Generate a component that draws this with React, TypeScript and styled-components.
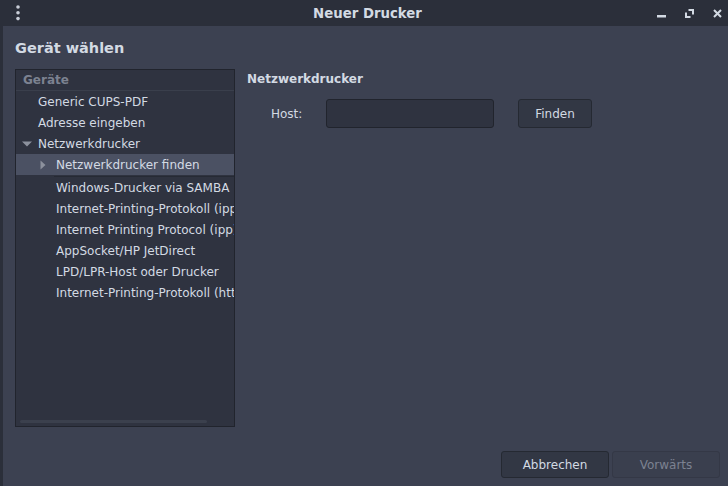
import styled, { createGlobalStyle } from 'styled-components';

// ─── Tokens ───────────────────────────────────────────────────────────────────

const c = {
  titlebar: '#2b2f3a',
  body: '#3c4151',
  base: '#2f3340',
  border: '#21242d',
  selected: '#4b5163',
  text: '#d3dae3',
  muted: '#7c8291',
  arrow: '#8c919d',
  button: '#323744',
};

const GlobalStyle = createGlobalStyle`
  html, body {
    margin: 0;
    padding: 0;
    background: ${c.body};
  }
  body {
    font-family: 'DejaVu Sans', 'Noto Sans', sans-serif;
    font-size: 12px;
    color: ${c.text};
  }
`;

// ─── Window chrome ────────────────────────────────────────────────────────────

const Window = styled.div`
  width: 728px;
  height: 486px;
  display: flex;
  flex-direction: column;
  overflow: hidden;
`;

const TitleBar = styled.header`
  height: 26px;
  flex: none;
  background: ${c.titlebar};
  display: grid;
  grid-template-columns: 40px 1fr 100px;
  align-items: center;
`;

const MenuButton = styled.div`
  padding-left: 13px;
  display: flex;
  align-items: center;
`;

const Title = styled.h1`
  margin: 0;
  text-align: center;
  font-size: 13.3px;
  font-weight: bold;
  color: ${c.text};
  padding-left: 67px;
`;

const WindowControls = styled.div`
  display: flex;
  justify-content: flex-end;
  align-items: center;
  gap: 19px;
  padding-right: 6px;
`;

const ControlButton = styled.span`
  width: 9px;
  height: 26px;
  display: flex;
  align-items: center;
  justify-content: center;
`;

const Body = styled.div`
  flex: 1;
  display: flex;
  min-height: 0;
`;

const EdgeStrip = styled.div`
  width: 3px;
  flex: none;
  background: ${c.titlebar};
`;

const Content = styled.main`
  flex: 1;
  display: flex;
  flex-direction: column;
  padding: 12px 8px 0 12px;
`;

const Heading = styled.h2`
  margin: 0;
  font-size: 14.5px;
  line-height: 20px;
  font-weight: bold;
  color: ${c.text};
`;

const Columns = styled.div`
  margin-top: 11px;
  display: flex;
  gap: 12px;
`;

// ─── Tree list ────────────────────────────────────────────────────────────────

const TreeFrame = styled.div`
  position: relative;
  width: 220px;
  height: 358px;
  box-sizing: border-box;
  border: 1px solid ${c.border};
  background: ${c.base};
  overflow: hidden;
`;

const TreeHeader = styled.div`
  height: 20px;
  line-height: 20px;
  padding-left: 7px;
  font-weight: bold;
  color: ${c.muted};
  border-bottom: 1px solid #3a3f4c;
`;

const Row = styled.div<{ $level: number; $selected?: boolean }>`
  position: relative;
  height: 21px;
  display: flex;
  align-items: center;
  white-space: nowrap;
  padding-left: ${({ $level }) => ($level === 1 ? 22 : 40)}px;
  background: ${({ $selected }) => ($selected ? c.selected : 'transparent')};
  margin-bottom: ${({ $selected }) => ($selected ? '2px' : '0')};
`;

const DropLine = styled.span`
  position: absolute;
  left: 38px;
  right: 0;
  bottom: -2px;
  height: 1px;
  background: #262a34;
`;

const Expander = styled.span`
  width: 16px;
  flex: none;
  display: flex;
  align-items: center;
  margin-left: -16px;
`;

const RowLabel = styled.span`
  color: ${c.text};
`;

const Scrollbar = styled.div`
  position: absolute;
  left: 4px;
  width: 187px;
  bottom: 3px;
  height: 3px;
  border-radius: 2px;
  background: #3b404d;
`;

// ─── Right panel ──────────────────────────────────────────────────────────────

const Panel = styled.section`
  flex: 1;
  display: flex;
  flex-direction: column;
`;

const PanelTitle = styled.div`
  font-weight: bold;
  font-size: 12px;
  line-height: 20px;
  color: ${c.text};
`;

const HostRow = styled.div`
  margin-top: 10px;
  display: flex;
  align-items: center;
`;

const HostLabel = styled.label`
  width: 79px;
  padding-left: 24px;
  box-sizing: border-box;
`;

const Entry = styled.div`
  width: 168px;
  height: 29px;
  box-sizing: border-box;
  background: ${c.base};
  border: 1px solid ${c.border};
  border-radius: 3px;
`;

const Button = styled.button<{ $disabled?: boolean }>`
  height: 29px;
  box-sizing: border-box;
  border-radius: 3px;
  font-family: inherit;
  font-size: 12px;
  padding: 0;
  background: ${({ $disabled }) => ($disabled ? '#3a3f4e' : c.button)};
  border: 1px solid ${({ $disabled }) => ($disabled ? '#343846' : '#252932')};
  color: ${({ $disabled }) => ($disabled ? c.muted : c.text)};
`;

const FindButton = styled(Button)`
  width: 74px;
  margin-left: 24px;
`;

const Footer = styled.footer`
  margin-top: 24px;
  display: flex;
  justify-content: flex-end;
  gap: 3px;
`;

const DialogButton = styled(Button)`
  width: 108px;
  height: 27px;
`;

// ─── Icons ────────────────────────────────────────────────────────────────────

const DotsIcon = () => (
  <svg width="10" height="22" viewBox="0 0 10 22">
    <circle cx="5" cy="5" r="1.8" fill="#c9ced8" />
    <circle cx="5" cy="10.7" r="1.8" fill="#c9ced8" />
    <circle cx="5" cy="16.6" r="1.8" fill="#c9ced8" />
  </svg>
);

const MinimizeIcon = () => (
  <svg width="9" height="9" viewBox="0 0 9 9">
    <rect x="0" y="6" width="9" height="2.5" fill="#d3dae3" />
  </svg>
);

const MaximizeIcon = () => (
  <svg width="9" height="9" viewBox="0 0 9 9" fill="none" stroke="#d3dae3" strokeWidth="2">
    <path d="M3.5 1H8V5.5" />
    <path d="M5.5 8H1V3.5" />
  </svg>
);

const CloseIcon = () => (
  <svg width="9" height="9" viewBox="0 0 9 9" stroke="#d3dae3" strokeWidth="2">
    <path d="M1 1L8 8M8 1L1 8" />
  </svg>
);

const ArrowDown = () => (
  <svg width="10" height="6" viewBox="0 0 10 6">
    <path d="M0 0.5H10L5 5.5Z" fill={c.arrow} />
  </svg>
);

const ArrowRight = () => (
  <svg width="6" height="10" viewBox="0 0 6 10">
    <path d="M0.5 0.5V9.5L5.5 5Z" fill={c.arrow} />
  </svg>
);

// ─── Data ─────────────────────────────────────────────────────────────────────

type TreeItem = {
  label: string;
  level: 1 | 2;
  expander?: 'down' | 'right';
  selected?: boolean;
};

const items: TreeItem[] = [
  { label: 'Generic CUPS-PDF', level: 1 },
  { label: 'Adresse eingeben', level: 1 },
  { label: 'Netzwerkdrucker', level: 1, expander: 'down' },
  { label: 'Netzwerkdrucker finden', level: 2, expander: 'right', selected: true },
  { label: 'Windows-Drucker via SAMBA', level: 2 },
  { label: 'Internet-Printing-Protokoll (ipps)', level: 2 },
  { label: 'Internet Printing Protocol (ipp)', level: 2 },
  { label: 'AppSocket/HP JetDirect', level: 2 },
  { label: 'LPD/LPR-Host oder Drucker', level: 2 },
  { label: 'Internet-Printing-Protokoll (https)', level: 2 },
];

// ─── App ──────────────────────────────────────────────────────────────────────

export default function App() {
  return (
    <>
      <GlobalStyle />
      <Window>
        <TitleBar>
          <MenuButton>
            <DotsIcon />
          </MenuButton>
          <Title>Neuer Drucker</Title>
          <WindowControls>
            <ControlButton><MinimizeIcon /></ControlButton>
            <ControlButton><MaximizeIcon /></ControlButton>
            <ControlButton><CloseIcon /></ControlButton>
          </WindowControls>
        </TitleBar>

        <Body>
          <EdgeStrip />
          <Content>
            <Heading>Gerät wählen</Heading>

            <Columns>
              <TreeFrame>
                <TreeHeader>Geräte</TreeHeader>
                {items.map((item) => (
                  <Row key={item.label} $level={item.level} $selected={item.selected}>
                    {item.expander && (
                      <Expander>
                        {item.expander === 'down' ? <ArrowDown /> : <ArrowRight />}
                      </Expander>
                    )}
                    <RowLabel>{item.label}</RowLabel>
                    {item.selected && <DropLine />}
                  </Row>
                ))}
                <Scrollbar />
              </TreeFrame>

              <Panel>
                <PanelTitle>Netzwerkdrucker</PanelTitle>
                <HostRow>
                  <HostLabel>Host:</HostLabel>
                  <Entry />
                  <FindButton>Finden</FindButton>
                </HostRow>
              </Panel>
            </Columns>

            <Footer>
              <DialogButton>Abbrechen</DialogButton>
              <DialogButton $disabled>Vorwärts</DialogButton>
            </Footer>
          </Content>
        </Body>
      </Window>
    </>
  );
}
